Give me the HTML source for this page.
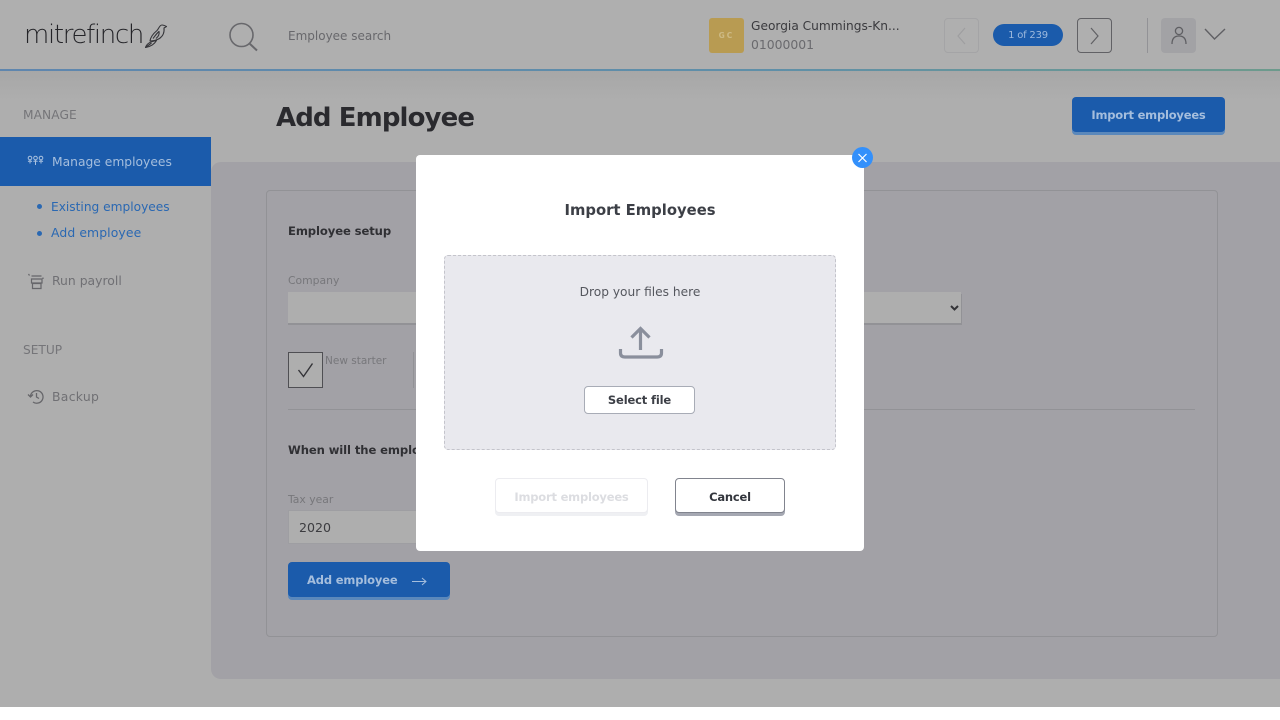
<!DOCTYPE html>
<html><head><meta charset="utf-8"><title>Add Employee</title>
<style>
html,body{margin:0;padding:0;width:1280px;height:720px;overflow:hidden;background:#fff}
body{font-family:"DejaVu Sans","Liberation Sans",sans-serif;position:relative}
.a{position:absolute;white-space:nowrap}
.b{font-weight:700}
</style></head><body>
<div class="a" style="left:0;top:0;width:1280px;height:707px;background:#aeaeae"></div>
<div class="a" style="left:0;top:0;width:1280px;height:69px;background:#afafaf"></div>
<div class="a" style="left:0;top:69px;width:1280px;height:2px;background:linear-gradient(90deg,#5f86ae,#5f8fa8 60%,#6d9a8c)"></div>
<div class="a" style="left:0;top:71px;width:1280px;height:30px;background:linear-gradient(#a7a7a7,#aeaeae)"></div>

<div class="a" style="left:24px;top:18px;font:300 26px/34px 'DejaVu Sans',sans-serif;color:#242428;letter-spacing:-1.35px">mitrefinch</div>
<svg class="a" style="left:144px;top:24px" width="24" height="24" viewBox="0 0 24 24" fill="none" stroke="#36363a" stroke-width="1.1" stroke-linejoin="round"><path d="M6 17C6.500 13 10 9 13 6.500C15 4.500 15.500 1 18 1C19.500 1 20.500 1.500 22.500 2.500L20 4C20.500 8 19 12 15.500 14.500C12 16.500 9 17 6 17Z"/><path d="M9 14.500C11 12 13 9 15 7.500C15.500 10 14.500 12.500 12 14.500"/><path d="M1.500 23.500C3 19 7 17.500 12.500 16.500C10.500 20 7 22.500 1.500 23.500Z"/><path d="M1.500 23.500L7.500 19"/></svg>
<svg class="a" style="left:228px;top:21px" width="32" height="32" viewBox="0 0 32 32" fill="none" stroke="#68686c" stroke-width="1.6"><circle cx="13.500" cy="14" r="11.500"/><path d="M21.500 22.500L29 29.500" stroke-width="2"/></svg>
<div class="a" style="left:288px;top:28px;font-size:12px;line-height:16px;color:#68686c">Employee search</div>

<div class="a" style="left:709px;top:18px;width:35px;height:35px;border-radius:3px;background:#b89b52;color:#cdba85;font-size:7.5px;font-weight:700;line-height:35px;text-align:center;letter-spacing:2px">GC</div>
<div class="a" style="left:751px;top:18px;font-size:12.2px;line-height:17px;color:#3a3a3e">Georgia Cummings-Kn...</div>
<div class="a" style="left:751px;top:37px;font-size:12.4px;line-height:16px;color:#6a6a6e">01000001</div>
<div class="a" style="left:944px;top:18px;width:33px;height:33px;border:1px solid #a4a4a6;border-radius:4px"></div>
<svg class="a" style="left:955px;top:26px" width="14" height="20" fill="none" stroke="#9e9ea0" stroke-width="1.2"><path d="M10 2L3 10L10 18"/></svg>
<div class="a" style="left:993px;top:24px;width:70px;height:22px;border-radius:11px;background:#1b5bab;color:#9db9dd;font-size:10px;line-height:23px;text-align:center;letter-spacing:-.2px">1 of 239</div>
<div class="a" style="left:1077px;top:18px;width:33px;height:33px;border:1px solid #616165;border-radius:4px"></div>
<svg class="a" style="left:1088px;top:26px" width="14" height="20" fill="none" stroke="#606064" stroke-width="1.2"><path d="M3 2L10 10L3 18"/></svg>
<div class="a" style="left:1147px;top:18px;width:1px;height:35px;background:#929296"></div>
<div class="a" style="left:1161px;top:18px;width:35px;height:35px;border-radius:4px;background:#a2a2a5"></div>
<svg class="a" style="left:1168px;top:24px" width="22" height="22" fill="none" stroke="#5f5f63" stroke-width="1.3"><circle cx="11" cy="7" r="3.6"/><path d="M4 20C4 14 7 12 11 12C15 12 18 14 18 20"/></svg>
<svg class="a" style="left:1203px;top:27px" width="24" height="14" fill="none" stroke="#606064" stroke-width="1.4"><path d="M2 2L11.500 12L22 2"/></svg>

<div class="a" style="left:23px;top:107px;font-size:12.2px;line-height:16px;color:#757579;letter-spacing:.1px">MANAGE</div>
<div class="a" style="left:0;top:137px;width:211px;height:49px;background:#1b5bab"></div>
<svg class="a" style="left:27px;top:155px" width="17" height="12" fill="none" stroke="#a9c1df" stroke-width="1"><circle cx="3" cy="3" r="1.800"/><circle cx="8.500" cy="3" r="1.800"/><circle cx="14" cy="3" r="1.800"/><path d="M1 6.500Q3 5.500 5 6.500M6.500 6.500Q8.500 5.500 10.500 6.500M12 6.500Q14 5.500 16 6.500M3 5V8.500M8.500 5V10M14 5V8.500"/></svg>
<div class="a" style="left:52px;top:154px;font-size:12.3px;line-height:17px;color:#a5bedd">Manage employees</div>
<div class="a" style="left:37px;top:204px;width:5px;height:5px;border-radius:50%;background:#2a68b2"></div>
<div class="a" style="left:51px;top:199px;font-size:12.2px;line-height:17px;color:#2a68b2">Existing employees</div>
<div class="a" style="left:37px;top:231px;width:5px;height:5px;border-radius:50%;background:#2a68b2"></div>
<div class="a" style="left:51px;top:224px;font-size:12.4px;line-height:17px;color:#2a68b2;letter-spacing:.1px">Add employee</div>
<svg class="a" style="left:27px;top:273px" width="18" height="18" fill="none" stroke="#66666a" stroke-width="1.2"><path d="M4.500 3H14.500M4.500 6H15V10H4.500zM5.500 10.500H14V15.500H5.500zM7 10V11M13 10V11"/><path d="M1.500 1l1 1.500M16 4.500v1.500"/></svg>
<div class="a" style="left:52px;top:272px;font-size:12.4px;line-height:17px;color:#707074">Run payroll</div>
<div class="a" style="left:23px;top:342px;font-size:12.2px;line-height:16px;color:#757579">SETUP</div>
<svg class="a" style="left:27px;top:388px" width="18" height="18" fill="none" stroke="#66666a" stroke-width="1.3"><path d="M3.500 8A6.300 6.300 0 1 1 6 14M1 6.500L3.500 9L6 6.500M9.500 5V9L12 10.500"/></svg>
<div class="a" style="left:52px;top:388px;font-size:12.4px;line-height:17px;color:#707074;letter-spacing:.3px">Backup</div>

<div class="a b" style="left:276px;top:100px;font:700 26px/36px 'DejaVu Sans',sans-serif;color:#2a2a2e;letter-spacing:-.9px">Add Employee</div>
<div class="a" style="left:1072px;top:97px;width:153px;height:35px;border-radius:4px;background:#1b5bab;box-shadow:0 3px 0 #5b88bb"></div>
<div class="a b" style="left:1072px;top:107px;width:153px;text-align:center;font-size:11.5px;line-height:17px;color:#a5bedd;letter-spacing:-.2px">Import employees</div>

<div class="a" style="left:211px;top:162px;width:1069px;height:517px;background:#a2a1a6;border-radius:10px 0 0 10px"></div>
<div class="a" style="left:266px;top:190px;width:950px;height:445px;border:1px solid #929296;border-radius:4px"></div>

<div class="a b" style="left:288px;top:223px;font-size:11.6px;line-height:17px;color:#303034;letter-spacing:-.1px">Employee setup</div>
<div class="a" style="left:288px;top:273px;font-size:10.8px;line-height:15px;color:#77777b">Company</div>
<div class="a" style="left:288px;top:292px;width:200px;height:31px;background:#aeaeae;box-shadow:0 2px 0 #929296"></div>
<div class="a" style="left:800px;top:292px;width:161px;height:31px;background:#aeaeae;box-shadow:1px 2px 0 #929296"></div>
<svg class="a" style="left:949px;top:304px" width="11" height="8" fill="none" stroke="#333337" stroke-width="2"><path d="M2 2L5.500 5.500L9 2"/></svg>
<div class="a" style="left:288px;top:352px;width:33px;height:34px;border:1px solid #4f4f53;background:#aeaeae"></div>
<svg class="a" style="left:296px;top:361px" width="20" height="18" fill="none" stroke="#333337" stroke-width="1.400"><path d="M2.500 9L7.500 15.500L16.500 2.500"/></svg>
<div class="a" style="left:325px;top:354px;font-size:10.5px;line-height:15px;color:#77777b">New starter</div>
<div class="a" style="left:413px;top:352px;width:1px;height:36px;background:#929296"></div>
<div class="a" style="left:288px;top:409px;width:907px;height:1px;background:#929296"></div>
<div class="a b" style="left:288px;top:442px;font-size:11.6px;line-height:17px;color:#303034;letter-spacing:-.1px;width:128px;overflow:hidden">When will the employee start</div>
<div class="a" style="left:288px;top:492px;font-size:10.8px;line-height:15px;color:#77777b">Tax year</div>
<div class="a" style="left:288px;top:510px;width:200px;height:34px;background:#aeaeae;border:1px solid #9e9ea2;box-sizing:border-box"></div>
<div class="a" style="left:299px;top:519px;font-size:12.6px;line-height:17px;color:#3c3c40">2020</div>
<div class="a" style="left:288px;top:562px;width:162px;height:35px;border-radius:4px;background:#1b5bab;box-shadow:0 3px 0 #5b88bb"></div>
<div class="a b" style="left:307px;top:572px;font-size:11.5px;line-height:17px;color:#a5bedd;letter-spacing:-.15px">Add employee</div>
<svg class="a" style="left:411px;top:575px" width="17" height="12" fill="none" stroke="#a5bedd" stroke-width="1"><path d="M1 6.500H15M11 3L15 6.500L11 10"/></svg>

<div class="a" style="left:416px;top:155px;width:448px;height:396px;background:#fff;border-radius:4px"></div>
<div class="a" style="left:852px;top:147px;width:21px;height:21px;border-radius:50%;background:#3390fb"></div>
<svg class="a" style="left:852px;top:147px" width="21" height="21" fill="none" stroke="#fff" stroke-width="1.200"><path d="M6.500 7L14.500 15M14.500 7L6.500 15"/></svg>
<div class="a b" style="left:416px;top:201px;width:448px;text-align:center;font-size:14.8px;line-height:20px;color:#3c3f46">Import Employees</div>
<div class="a" style="left:444px;top:255px;width:392px;height:195px;box-sizing:border-box;background:#e9e9ee;border:1px dashed #c4c4cb;border-radius:4px"></div>
<div class="a" style="left:444px;top:284px;width:392px;text-align:center;font-size:12.2px;line-height:17px;color:#55575e">Drop your files here</div>
<svg class="a" style="left:617px;top:325px" width="48" height="36" fill="none" stroke="#8a8f9c" stroke-width="3.200"><path d="M23.500 25V4M14.500 12.500L23.500 3.500L32.500 12.500"/><path d="M3.500 24V28Q3.500 32 8 32H40Q44.500 32 44.500 28V24"/></svg>
<div class="a" style="left:584px;top:386px;width:111px;height:28px;box-sizing:border-box;background:#fff;border:1px solid #a8acb6;border-radius:4px"></div>
<div class="a b" style="left:584px;top:392px;width:111px;text-align:center;font-size:11.5px;line-height:17px;color:#3c3f46;letter-spacing:-.15px">Select file</div>
<div class="a" style="left:495px;top:478px;width:153px;height:35px;box-sizing:border-box;background:#fff;border:1px solid #ececf0;border-radius:4px;box-shadow:0 3px 0 #eff0f3"></div>
<div class="a b" style="left:495px;top:489px;width:153px;text-align:center;font-size:11.5px;line-height:17px;color:#dcdde1;letter-spacing:-.2px">Import employees</div>
<div class="a" style="left:675px;top:478px;width:110px;height:35px;box-sizing:border-box;background:#fff;border:1px solid #81848e;border-radius:4px;box-shadow:0 3px 0 #a5a8b2"></div>
<div class="a b" style="left:675px;top:489px;width:110px;text-align:center;font-size:11.5px;line-height:17px;color:#33363d;letter-spacing:-.2px">Cancel</div>
</body></html>
